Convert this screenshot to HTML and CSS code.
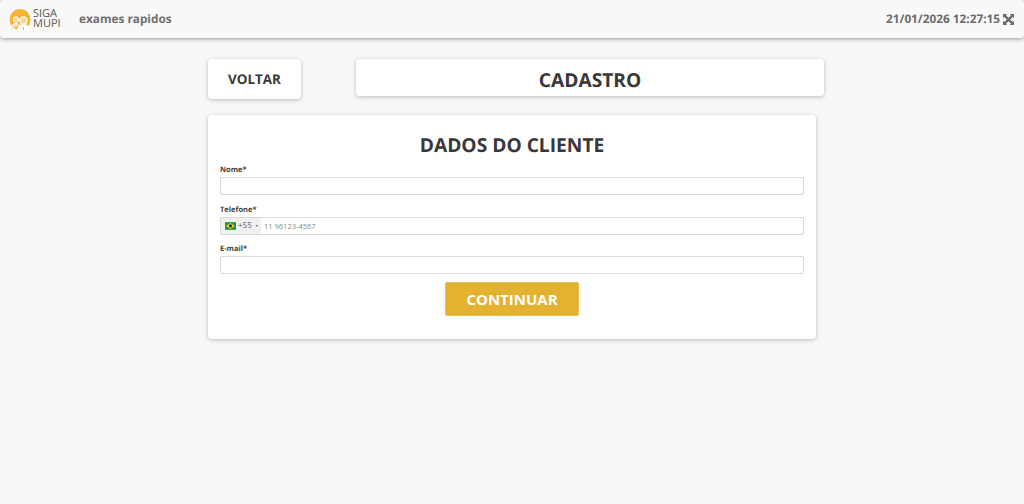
FILE: index.html
```html
<!DOCTYPE html>
<html lang="pt-BR">
<head>
    <meta charset="UTF-8">
    <title>Cadastro</title>
    <link rel="stylesheet" href="styles.css">
</head>
<body>
<div class="topbar">
    <div class="brand">
        <svg class="logo-mark" viewBox="0 0 24 22" width="24" height="22">
            <circle cx="11" cy="10.500" r="10.500" fill="#f6b332"/>
            <path d="M0 22V17.500C2 19 3 15.500 4 15V22z" fill="#f8f8f8"/>
            <circle cx="7" cy="10.500" r="2.800" fill="#fbd78c" stroke="#fff" stroke-width="1"/>
            <path d="M2 21c0-4 2-6.500 5-6.500 1.500 0 2.500.5 3.500 1.500" fill="#f8e0a8" stroke="#fff" stroke-width="1"/>
            <circle cx="14.500" cy="11.500" r="3.600" fill="#fbd78c" stroke="#fff" stroke-width="1.200"/>
            <path d="M8 22c0-4 2.500-7 6.500-7s6.500 3 6.500 7z" fill="#fff"/>
            <path d="M14.500 18v3" stroke="#f6b332" stroke-width="1"/>
        </svg>
        <div class="logo-text">SIGA MUPI</div>
    </div>
    <div class="app-name">exames rapidos</div>
    <div class="clock">21/01/2026 12:27:15</div>
    <svg class="expand" viewBox="0 0 12 12" width="11" height="11">
        <path d="M0 0h4.600L3.200 1.400 6 4.200l2.800-2.800L7.400 0H12v4.600l-1.400-1.400L7.800 6l2.800 2.800L12 7.400V12H7.400l1.400-1.400L6 7.800l-2.800 2.800L4.600 12H0V7.400l1.400 1.400L4.200 6 1.400 3.200 0 4.600z" fill="#6b6b6b"/>
    </svg>
</div>

<div class="page">
    <div class="head-row">
        <a class="card btn-back">VOLTAR</a>
        <div class="card page-title">CADASTRO</div>
    </div>

    <div class="card form-card">
        <h1>DADOS DO CLIENTE</h1>
        <div class="field">
            <label>Nome*</label>
            <input class="input" type="text">
        </div>
        <div class="field">
            <label>Telefone*</label>
            <div class="input phone">
                <div class="dial">
                    <svg viewBox="0 0 20 14" width="11" height="8">
                        <rect width="20" height="14" fill="#1f9a3c"/>
                        <path d="M10 1.500L18 7l-8 5.500L2 7z" fill="#f7d417"/>
                        <circle cx="10" cy="7" r="3.200" fill="#1d3f8f"/>
                    </svg>
                    <span class="code">+55</span>
                    <span class="caret"></span>
                </div>
                <input class="phone-num" type="text" placeholder="11 96123-4567">
            </div>
        </div>
        <div class="field">
            <label>E-mail*</label>
            <input class="input" type="text">
        </div>
        <div class="actions">
            <button class="btn-go">CONTINUAR</button>
        </div>
    </div>
</div>
</body>
</html>
```

FILE: styles.css
```css
*{box-sizing:border-box;}
html,body{height:100%;}
body{
    margin:0;
    background-color:#f8f8f8;
    font-family:"Open Sans","Liberation Sans",sans-serif;
    color:#383838;
    text-rendering:geometricPrecision;
}

/*topbar*/
.topbar{
    display:flex;
    align-items:center;
    height:38px;
    padding:0 10px 0 9px;
    background-color:#f8f8f8;
    border-radius:4px;
    box-shadow:0 1px 4px rgba(0,0,0,.4);
}
.brand{display:flex;align-items:center;width:70px;}
.logo-mark{display:block;margin-top:2px;}
.logo-text{
    width:26px;
    font-size:11px;
    line-height:10px;
    color:#555;
}
.app-name{font-size:11.800px;font-weight:700;color:#6f6f6f;}
.clock{margin-left:auto;font-size:11.800px;font-weight:700;color:#6b6b6b;}
.expand{margin-left:3px;}

/*content*/
.page{width:616px;margin:21px 0 0 208px;}
.card{
    background-color:#fff;
    border-radius:4px;
    box-shadow:0 1px 4px rgba(0,0,0,.25);
}
.head-row{display:flex;align-items:flex-start;}
.btn-back{
    width:93px;
    height:40px;
    font-size:13.440px;
    font-weight:700;
    line-height:41px;
    text-align:center;
}
.page-title{
    width:468px;
    height:37px;
    margin-left:55px;
    font-size:19.200px;
    font-weight:700;
    line-height:41px;
    text-align:center;
}
.form-card{
    width:608px;
    height:224px;
    margin-top:16px;
    padding:16px 12px 0;
}
h1{
    margin:0;
    font-size:19.200px;
    line-height:27px;
    font-weight:700;
    text-align:center;
}
.field{width:584px;margin-bottom:8.500px;}
.form-card h1 + .field{margin-top:6px;}
label{
    display:block;
    height:13px;
    font-size:7.500px;
    font-weight:700;
    line-height:12.500px;
    color:#4a4037;
}
.input{
    display:block;
    width:100%;
    height:18px;
    padding:0;
    background-color:#fff;
    border:1px solid #d9d9d9;
    border-radius:2px;
    outline:none;
}
.phone{display:flex;align-items:stretch;overflow:hidden;}
.dial{
    display:flex;
    align-items:center;
    width:40px;
    padding-left:4px;
    background-color:#f0f0f0;
}
.code{margin-left:2px;font-size:8px;color:#666;}
.caret{
    width:0;
    height:0;
    margin-left:4px;
    border-left:1.500px solid transparent;
    border-right:1.500px solid transparent;
    border-top:2px solid #555;
}
.phone-num{
    flex:1;
    min-width:0;
    padding:0 3px;
    border:0;
    outline:none;
    font-family:inherit;
    font-size:7.500px;
}
.phone-num::placeholder{color:#8a8a8a;opacity:1;}
.actions{display:flex;justify-content:center;margin-top:-.500px;}
.btn-go{
    width:134px;
    height:34px;
    padding:0;
    border:1px solid #e8bf55;
    border-radius:2px;
    background-color:#e3b230;
    color:#fff;
    font-family:inherit;
    font-size:15px;
    font-weight:700;
}
```
